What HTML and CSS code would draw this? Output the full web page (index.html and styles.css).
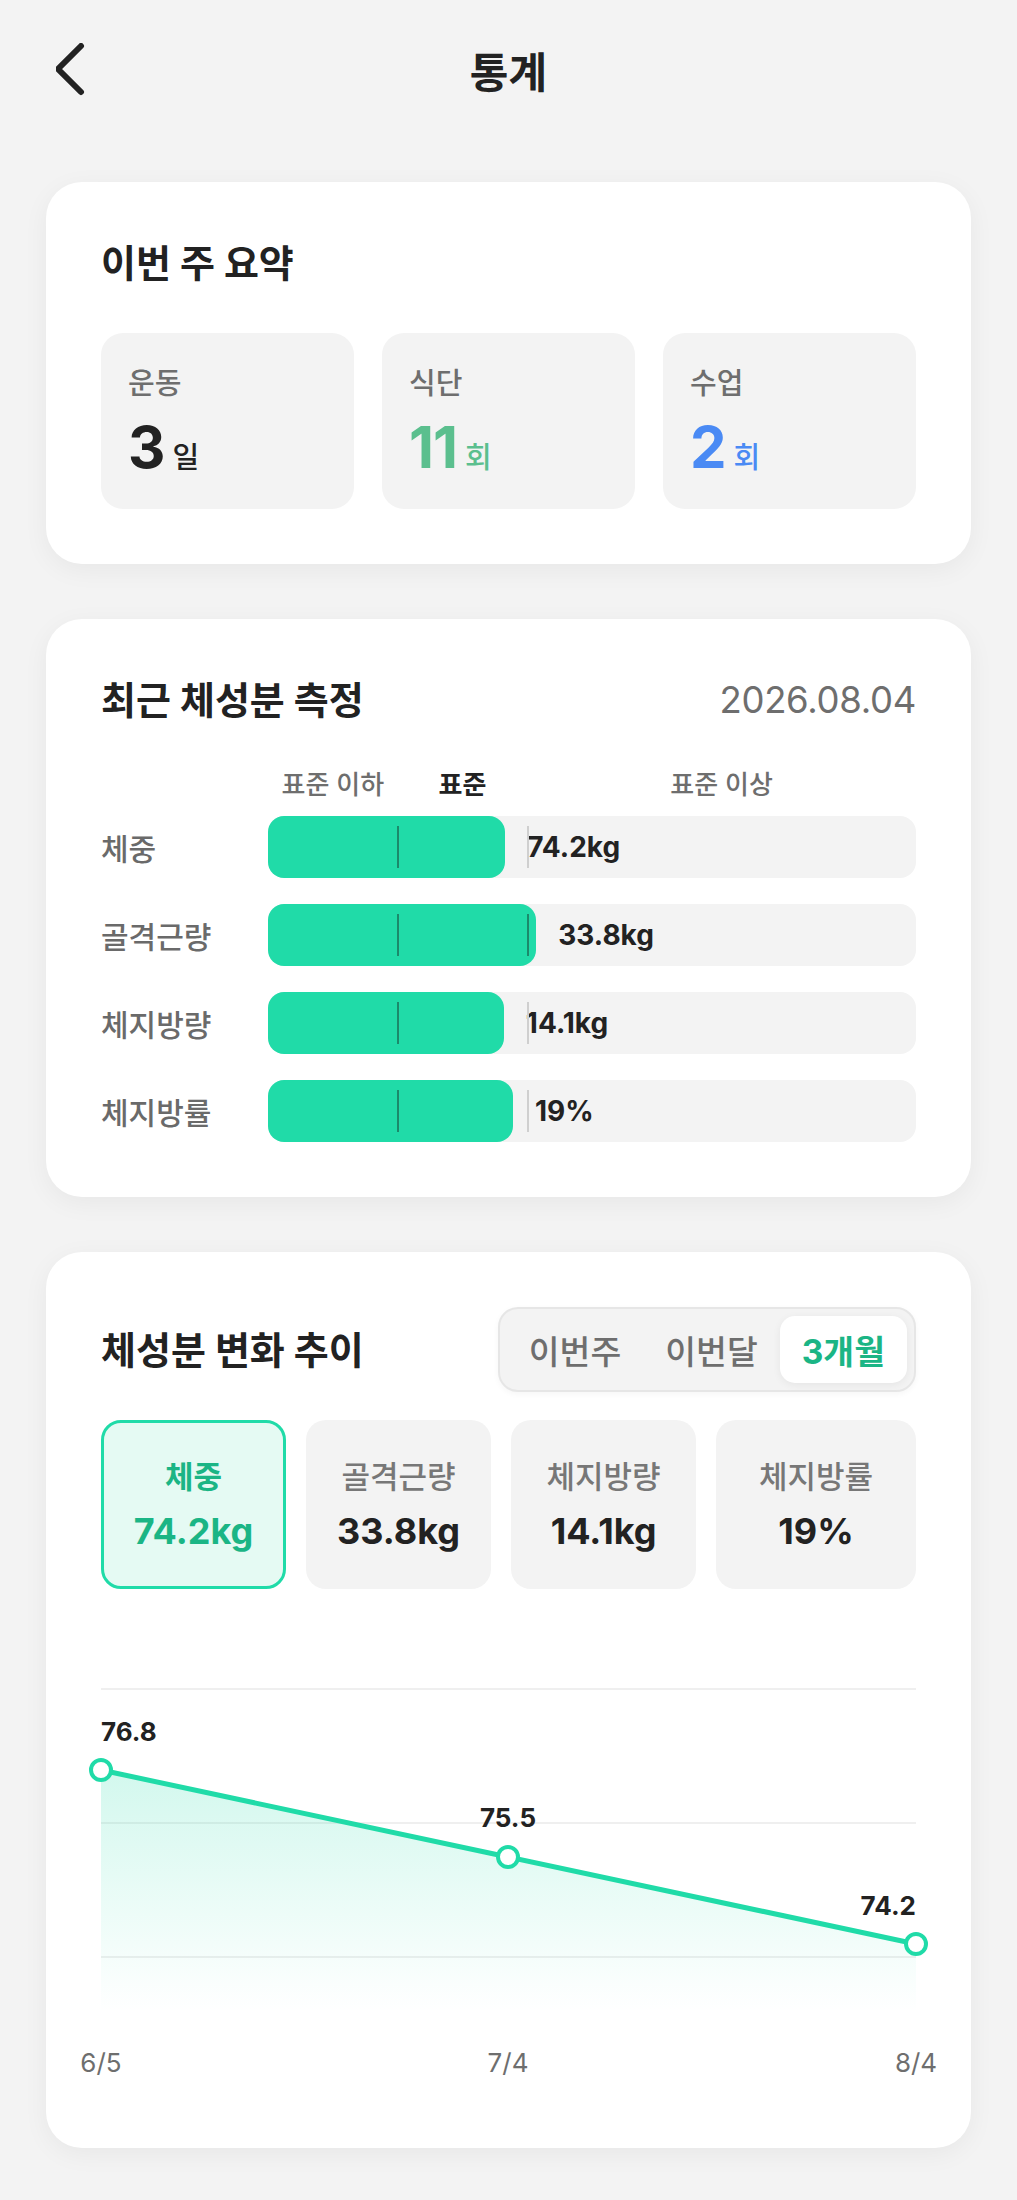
FILE: index.html
```html
<!DOCTYPE html>
<html lang="ko">
<head>
<meta charset="utf-8">
<title>통계</title>
<link rel="stylesheet" href="styles.css">
</head>
<body>
<div class="page">
  <header class="topbar">
    <button class="back" aria-label="뒤로">
      <svg width="40" height="60" viewBox="0 0 40 60"><path d="M25 3 L2 26 L25 49" fill="none" stroke="#222" stroke-width="6" stroke-linecap="round" stroke-linejoin="round"/></svg>
    </button>
    <h1 class="title">통계</h1>
    <span></span>
  </header>

  <main class="content">
    <section class="card">
      <h2 class="card-title">이번 주 요약</h2>
      <div class="stat-grid">
        <div class="stat-box">
          <div class="stat-label">운동</div>
          <div class="stat-value"><span class="num">3</span><span class="unit">일</span></div>
        </div>
        <div class="stat-box green">
          <div class="stat-label">식단</div>
          <div class="stat-value"><span class="num">11</span><span class="unit">회</span></div>
        </div>
        <div class="stat-box blue">
          <div class="stat-label">수업</div>
          <div class="stat-value"><span class="num">2</span><span class="unit">회</span></div>
        </div>
      </div>
    </section>

    <section class="card">
      <div class="card-head">
        <h2 class="card-title">최근 체성분 측정</h2>
        <span class="date">2026.08.04</span>
      </div>
      <div class="measure">
        <div class="scale-head">
          <span>표준 이하</span>
          <span class="std">표준</span>
          <span>표준 이상</span>
        </div>
        <div class="m-row">
          <span class="m-label">체중</span>
          <div class="track">
            <div class="fill" style="width:36.6%"></div>
            <span class="m-value">74.2kg</span>
            <i class="marker m1"></i><i class="marker m2"></i>
          </div>
        </div>
        <div class="m-row">
          <span class="m-label">골격근량</span>
          <div class="track">
            <div class="fill" style="width:41.4%"></div>
            <span class="m-value">33.8kg</span>
            <i class="marker m1"></i><i class="marker m2 on-fill"></i>
          </div>
        </div>
        <div class="m-row">
          <span class="m-label">체지방량</span>
          <div class="track">
            <div class="fill" style="width:36.4%"></div>
            <span class="m-value">14.1kg</span>
            <i class="marker m1"></i><i class="marker m2"></i>
          </div>
        </div>
        <div class="m-row">
          <span class="m-label">체지방률</span>
          <div class="track">
            <div class="fill" style="width:37.8%"></div>
            <span class="m-value">19%</span>
            <i class="marker m1"></i><i class="marker m2"></i>
          </div>
        </div>
      </div>
    </section>

    <section class="card">
      <div class="card-head trend-head">
        <h2 class="card-title">체성분 변화 추이</h2>
        <div class="segment">
          <span class="seg">이번주</span>
          <span class="seg">이번달</span>
          <span class="seg active">3개월</span>
        </div>
      </div>
      <div class="chips">
        <div class="chip active"><span class="chip-label">체중</span><span class="chip-value">74.2kg</span></div>
        <div class="chip"><span class="chip-label">골격근량</span><span class="chip-value">33.8kg</span></div>
        <div class="chip"><span class="chip-label">체지방량</span><span class="chip-value">14.1kg</span></div>
        <div class="chip"><span class="chip-label">체지방률</span><span class="chip-value">19%</span></div>
      </div>
      <svg class="chart" width="815" height="433" viewBox="0 0 815 433">
        <defs>
          <linearGradient id="area" x1="0" y1="0" x2="0" y2="1">
            <stop offset="0" stop-color="#20DBA8" stop-opacity="0.2"/>
            <stop offset="1" stop-color="#20DBA8" stop-opacity="0"/>
          </linearGradient>
        </defs>
        <line class="grid" x1="0" y1="29" x2="815" y2="29"/>
        <line class="grid" x1="0" y1="163" x2="815" y2="163"/>
        <line class="grid" x1="0" y1="297" x2="815" y2="297"/>
        <path d="M0 110 L407 197 L815 284 L815 352 L0 352 Z" fill="url(#area)"/>
        <polyline points="0,110 407,197 815,284" fill="none" stroke="#20DBA8" stroke-width="5" stroke-linejoin="round"/>
        <circle cx="0" cy="110" r="10" fill="#fff" stroke="#20DBA8" stroke-width="4"/>
        <circle cx="407" cy="197" r="10" fill="#fff" stroke="#20DBA8" stroke-width="4"/>
        <circle cx="815" cy="284" r="10" fill="#fff" stroke="#20DBA8" stroke-width="4"/>
        <text class="pt" x="0" y="81" text-anchor="start">76.8</text>
        <text class="pt" x="407" y="167" text-anchor="middle">75.5</text>
        <text class="pt" x="815" y="255" text-anchor="end">74.2</text>
        <text class="ax" x="0" y="412" text-anchor="middle">6/5</text>
        <text class="ax" x="407" y="412" text-anchor="middle">7/4</text>
        <text class="ax" x="815" y="412" text-anchor="middle">8/4</text>
      </svg>
    </section>
  </main>
</div>
</body>
</html>
```

FILE: styles.css
```css
* { box-sizing: border-box; }

body {
  margin: 0;
  background: #f3f3f3;
  font-family: "Inter", "Noto Sans CJK KR", sans-serif;
  color: #222;
}

.page {
  width: 1017px;
}

.topbar {
  height: 146px;
  display: grid;
  grid-template-columns: 1fr auto 1fr;
  align-items: center;
}

.back {
  justify-self: start;
  margin-left: 56px;
  padding: 0;
  border: 0;
  background: none;
  width: 40px;
  height: 52px;
  display: flex;
  align-items: center;
}

.title {
  margin: 0;
  font-size: 42px;
  font-weight: 700;
  line-height: 1;
}

.content {
  padding: 36px 46px 54px;
  display: flex;
  flex-direction: column;
  gap: 55px;
}

.card {
  background: #fff;
  border-radius: 36px;
  padding: 55px;
  box-shadow: 0 6px 26px rgba(0, 0, 0, 0.05);
}

.card-title {
  margin: 0;
  font-size: 38px;
  font-weight: 700;
  line-height: 52px;
  color: #222;
}

.card-head {
  display: flex;
  justify-content: space-between;
  align-items: center;
}

.date {
  font-size: 36.5px;
  color: #6e6e6e;
  letter-spacing: -0.3px;
}

/* summary */
.stat-grid {
  margin-top: 44px;
  display: grid;
  grid-template-columns: repeat(3, 1fr);
  gap: 28px;
}

.stat-box {
  background: #f3f3f3;
  border-radius: 22px;
  padding: 33px 27px 30px;
  height: 176px;
}

.stat-label {
  font-size: 29px;
  line-height: 36px;
  color: #6e6e6e;
  font-weight: 500;
}

.stat-value {
  margin-top: 14px;
  display: flex;
  align-items: baseline;
  gap: 8px;
  color: #222;
}

.stat-value .num {
  font-size: 58px;
  font-weight: 700;
  line-height: 62px;
  letter-spacing: -1px;
}

.stat-value .unit {
  font-size: 29px;
  font-weight: 500;
}

.stat-box.green .stat-value { color: #5bbf8e; }
.stat-box.blue .stat-value { color: #4a8af4; }

/* measurement */
.measure {
  margin-top: 44px;
  display: flex;
  flex-direction: column;
  gap: 26px;
}

.scale-head {
  margin-left: 167px;
  display: grid;
  grid-template-columns: 20% 20% 60%;
  text-align: center;
  font-size: 26px;
  line-height: 30px;
  color: #6e6e6e;
  font-weight: 500;
  margin-bottom: -10px;
}

.scale-head .std {
  color: #222;
  font-weight: 700;
}

.m-row {
  display: grid;
  grid-template-columns: 167px 1fr;
  align-items: center;
}

.m-label {
  font-size: 30px;
  color: #6a6a6a;
  font-weight: 500;
}

.track {
  position: relative;
  height: 62px;
  background: #f3f3f3;
  border-radius: 16px;
  display: flex;
  align-items: center;
}

.fill {
  height: 100%;
  background: #20dba8;
  border-radius: 16px;
}

.m-value {
  margin-left: 22px;
  font-size: 28px;
  font-weight: 700;
  color: #222;
}

.marker {
  position: absolute;
  top: 10px;
  bottom: 10px;
  width: 2px;
  background: #cfcfcf;
}

.marker.m1 {
  left: 19.9%;
  background: #1b8a6b;
}

.marker.m2 { left: 40%; }
.marker.m2.on-fill { background: #1b8a6b; }

/* trend */
.segment {
  display: flex;
  padding: 7px;
  background: #f3f3f3;
  border: 2px solid #e6e6e6;
  border-radius: 20px;
  box-shadow: 0 2px 6px rgba(0, 0, 0, 0.04);
}

.seg {
  padding: 0 22px;
  height: 67px;
  display: flex;
  align-items: center;
  font-size: 33.5px;
  color: #6e6e6e;
  font-weight: 500;
  border-radius: 15px;
}

.seg.active {
  background: #fff;
  color: #1bb585;
  font-weight: 700;
  box-shadow: 0 2px 8px rgba(0, 0, 0, 0.06);
}

.chips {
  margin-top: 28px;
  display: grid;
  grid-template-columns: 1fr 1fr 1fr 1.08fr;
  gap: 20px;
}

.chip {
  height: 169px;
  background: #f3f3f3;
  border-radius: 20px;
  display: flex;
  flex-direction: column;
  align-items: center;
  justify-content: center;
  gap: 14px;
  border: 3px solid transparent;
}

.chip.active {
  background: #e5faf3;
  border-color: #20dba8;
}

.chip-label {
  font-size: 31px;
  line-height: 38px;
  color: #777;
  font-weight: 500;
}

.chip-value {
  font-size: 36px;
  line-height: 42px;
  font-weight: 700;
  color: #222;
}

.chip.active .chip-label,
.chip.active .chip-value {
  color: #1bb585;
  font-weight: 700;
}

.chart {
  display: block;
  margin-top: 71px;
  overflow: visible;
}

.chart .grid {
  stroke: #efefef;
  stroke-width: 2;
}

.chart .pt {
  font-family: "Inter", sans-serif;
  font-size: 26px;
  font-weight: 700;
  fill: #222;
}

.chart .ax {
  font-family: "Inter", sans-serif;
  font-size: 26px;
  fill: #6e6e6e;
}
```
